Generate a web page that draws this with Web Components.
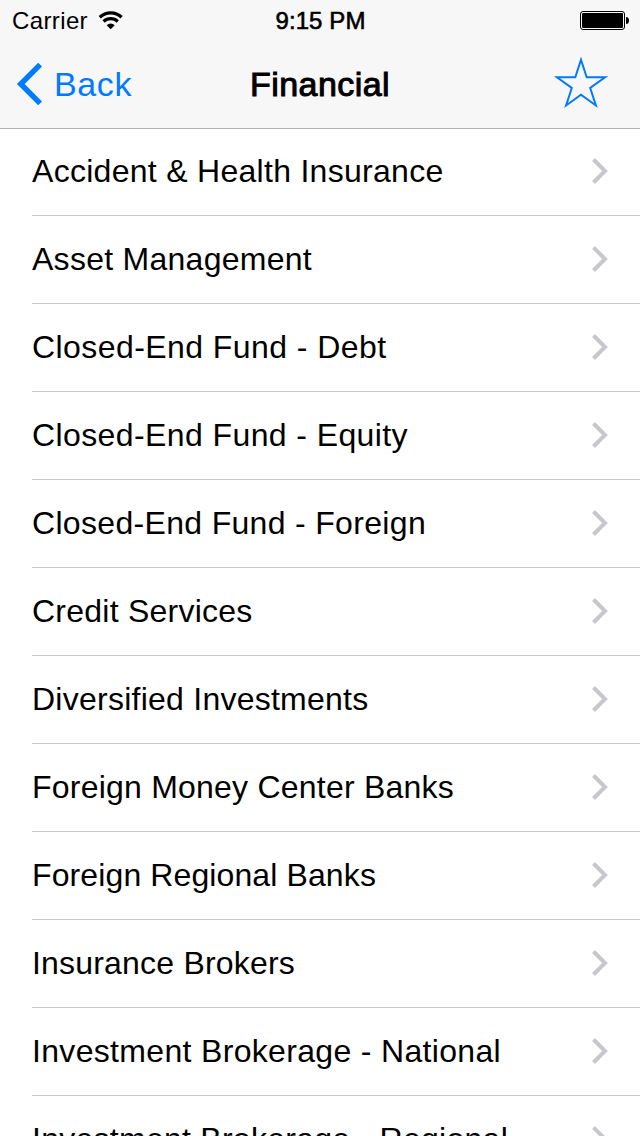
<!DOCTYPE html>
<html lang="en">
<head>
<meta charset="utf-8">
<title>Financial</title>
<style>
html, body{
    margin: 0;
    height: 1136px;
    overflow: hidden;
    background: #FFF;
    color: #000;
    font-family: "Liberation Sans", Arial, sans-serif;
}
</style>
</head>
<body>
<app-screen>
    <status-bar slot="header" carrier="Carrier" time="9:15 PM"></status-bar>
    <nav-bar slot="header">
        <fit-text slot="back" width="78">Back</fit-text>
        <fit-text slot="title" width="140">Financial</fit-text>
    </nav-bar>
    <list-row width="411.5">Accident &amp; Health Insurance</list-row>
    <list-row width="280">Asset Management</list-row>
    <list-row width="354.5">Closed-End Fund - Debt</list-row>
    <list-row width="376">Closed-End Fund - Equity</list-row>
    <list-row width="394">Closed-End Fund - Foreign</list-row>
    <list-row width="220.5">Credit Services</list-row>
    <list-row width="336.5">Diversified Investments</list-row>
    <list-row width="422">Foreign Money Center Banks</list-row>
    <list-row width="344">Foreign Regional Banks</list-row>
    <list-row width="263">Insurance Brokers</list-row>
    <list-row width="469">Investment Brokerage - National</list-row>
    <list-row width="476">Investment Brokerage - Regional</list-row>
</app-screen>

<script>
function createTemplate(html){
    const template = document.createElement('template');
    template.innerHTML = html;
    return template;
}

const screenTemplate = createTemplate(`
<style>
:host{
    display: flex;
    flex-direction: column;
    width: 640px;
    height: 1136px;
    overflow: hidden;
}
header{
    position: relative;
    z-index: 1;
    flex: none;
    background: #F7F7F7;
    box-shadow: 0 1px 0 #B2B2B2;
}
</style>
<header><slot name="header"></slot></header>
<main><slot></slot></main>
`);

class AppScreen extends HTMLElement {
    constructor(){
        super();
        this.attachShadow({ mode: 'open' });
        this.shadowRoot.appendChild(screenTemplate.content.cloneNode(true));
    }
}

// One line of text, tracked so that it takes exactly `width` pixels
const fitTemplate = createTemplate(`
<style>
:host{ display: inline-block; white-space: nowrap; }
span{ display: inline-block; }
</style>
<span><slot></slot></span>
`);

class FitText extends HTMLElement {
    constructor(){
        super();
        this.attachShadow({ mode: 'open' });
        this.shadowRoot.appendChild(fitTemplate.content.cloneNode(true));
        this.$span = this.shadowRoot.querySelector('span');
    }

    fit(){
        const width = Number(this.getAttribute('width'));
        const count = this.textContent.length;
        if (!width || !count) return;
        this.style.letterSpacing = '0';
        const natural = this.$span.getBoundingClientRect().width;
        this.style.letterSpacing = (width - natural) / count + 'px';
    }
}

const statusTemplate = createTemplate(`
<style>
:host{
    display: grid;
    grid-template-columns: 1fr auto 1fr;
    align-items: center;
    box-sizing: border-box;
    height: 40px;
    padding: 1px 11px 0 12px;
    font-size: 24px;
    line-height: 39px;
}
.left{ display: flex; gap: 10px; }
.time{ -webkit-text-stroke: 0.6px #000; }
.battery{ justify-self: end; }
svg{ display: block; }
</style>
<div class="left">
    <fit-text class="carrier" width="76"></fit-text>
    <svg width="26" height="39" viewBox="98 1 26 39">
        <g fill="none" stroke="#000">
            <path d="M99.8 17.2A16 16 0 0 1 121.6 17.2" stroke-width="3.3"/>
            <path d="M103.6 21.5A10.2 10.2 0 0 1 117.8 21.5" stroke-width="3.2"/>
        </g>
        <path d="M110.7 29.2L106.7 25.2A5.8 5.8 0 0 1 114.7 25.2Z"/>
    </svg>
</div>
<fit-text class="time" width="90"></fit-text>
<svg class="battery" width="49" height="39" viewBox="580 1 49 39">
    <rect x="580.5" y="11.5" width="44" height="18" rx="2.5" fill="none" stroke="#000"/>
    <rect x="582" y="13" width="41" height="15" rx="1"/>
    <path d="M626 17Q629 17 629 20.5Q629 24 626 24Z"/>
</svg>
`);

class StatusBar extends HTMLElement {
    constructor(){
        super();
        this.attachShadow({ mode: 'open' });
        this.shadowRoot.appendChild(statusTemplate.content.cloneNode(true));
    }

    connectedCallback(){
        const $carrier = this.shadowRoot.querySelector('.carrier');
        const $time = this.shadowRoot.querySelector('.time');
        $carrier.textContent = this.getAttribute('carrier');
        $time.textContent = this.getAttribute('time');
    }
}

const navTemplate = createTemplate(`
<style>
:host{
    display: grid;
    grid-template-columns: 234px auto 1fr;
    align-items: center;
    height: 88px;
    padding: 0 31px 0 16px;
    font-size: 34px;
    line-height: 88px;
}
.back{ display: flex; gap: 11px; color: #007AFF; }
.title{ -webkit-text-stroke: 1px #000; }
.star{ justify-self: end; }
svg{ display: block; fill: none; stroke: #007AFF; }
</style>
<div class="back">
    <svg width="27" height="88" viewBox="16 40 27 88">
        <path d="M40.1 64.7L20.8 84L40.1 103.3" stroke-width="5.4"/>
    </svg>
    <slot name="back"></slot>
</div>
<div class="title"><slot name="title"></slot></div>
<svg class="star" width="56" height="88" viewBox="553 40 56 88">
    <path d="M581 59.7L586.7 77.2L605.1 77.2L590.2 88L595.9 105.5L581 94.7L566.1 105.5L571.8 88L556.9 77.2L575.3 77.2Z" stroke-width="2"/>
</svg>
`);

class NavBar extends HTMLElement {
    constructor(){
        super();
        this.attachShadow({ mode: 'open' });
        this.shadowRoot.appendChild(navTemplate.content.cloneNode(true));
    }
}

const rowTemplate = createTemplate(`
<style>
:host{
    display: block;
    padding-left: 32px;
    font-size: 32px;
    line-height: 86px;
}
.row{
    display: flex;
    justify-content: space-between;
    box-sizing: border-box;
    height: 88px;
    padding: 0 32px 1px 0;
    border-bottom: 1px solid #C8C7CC;
}
svg{ display: block; }
</style>
<div class="row">
    <fit-text></fit-text>
    <svg width="16" height="86" viewBox="0 0 16 86">
        <path d="M1.5 31.5L13 43L1.5 54.5" fill="none" stroke="#C7C7CC" stroke-width="4"/>
    </svg>
</div>
`);

class ListRow extends HTMLElement {
    constructor(){
        super();
        this.attachShadow({ mode: 'open' });
        this.shadowRoot.appendChild(rowTemplate.content.cloneNode(true));
    }

    connectedCallback(){
        const $text = this.shadowRoot.querySelector('fit-text');
        $text.setAttribute('width', this.getAttribute('width'));
        $text.textContent = this.textContent;
    }
}

customElements.define('fit-text', FitText);
customElements.define('app-screen', AppScreen);
customElements.define('status-bar', StatusBar);
customElements.define('nav-bar', NavBar);
customElements.define('list-row', ListRow);

// Labels are measured once every element around them is in place
function fitAll(root){
    root.querySelectorAll('*').forEach(function(element){
        if (element.fit) element.fit();
        if (element.shadowRoot) fitAll(element.shadowRoot);
    });
}
fitAll(document);
</script>
</body>
</html>
